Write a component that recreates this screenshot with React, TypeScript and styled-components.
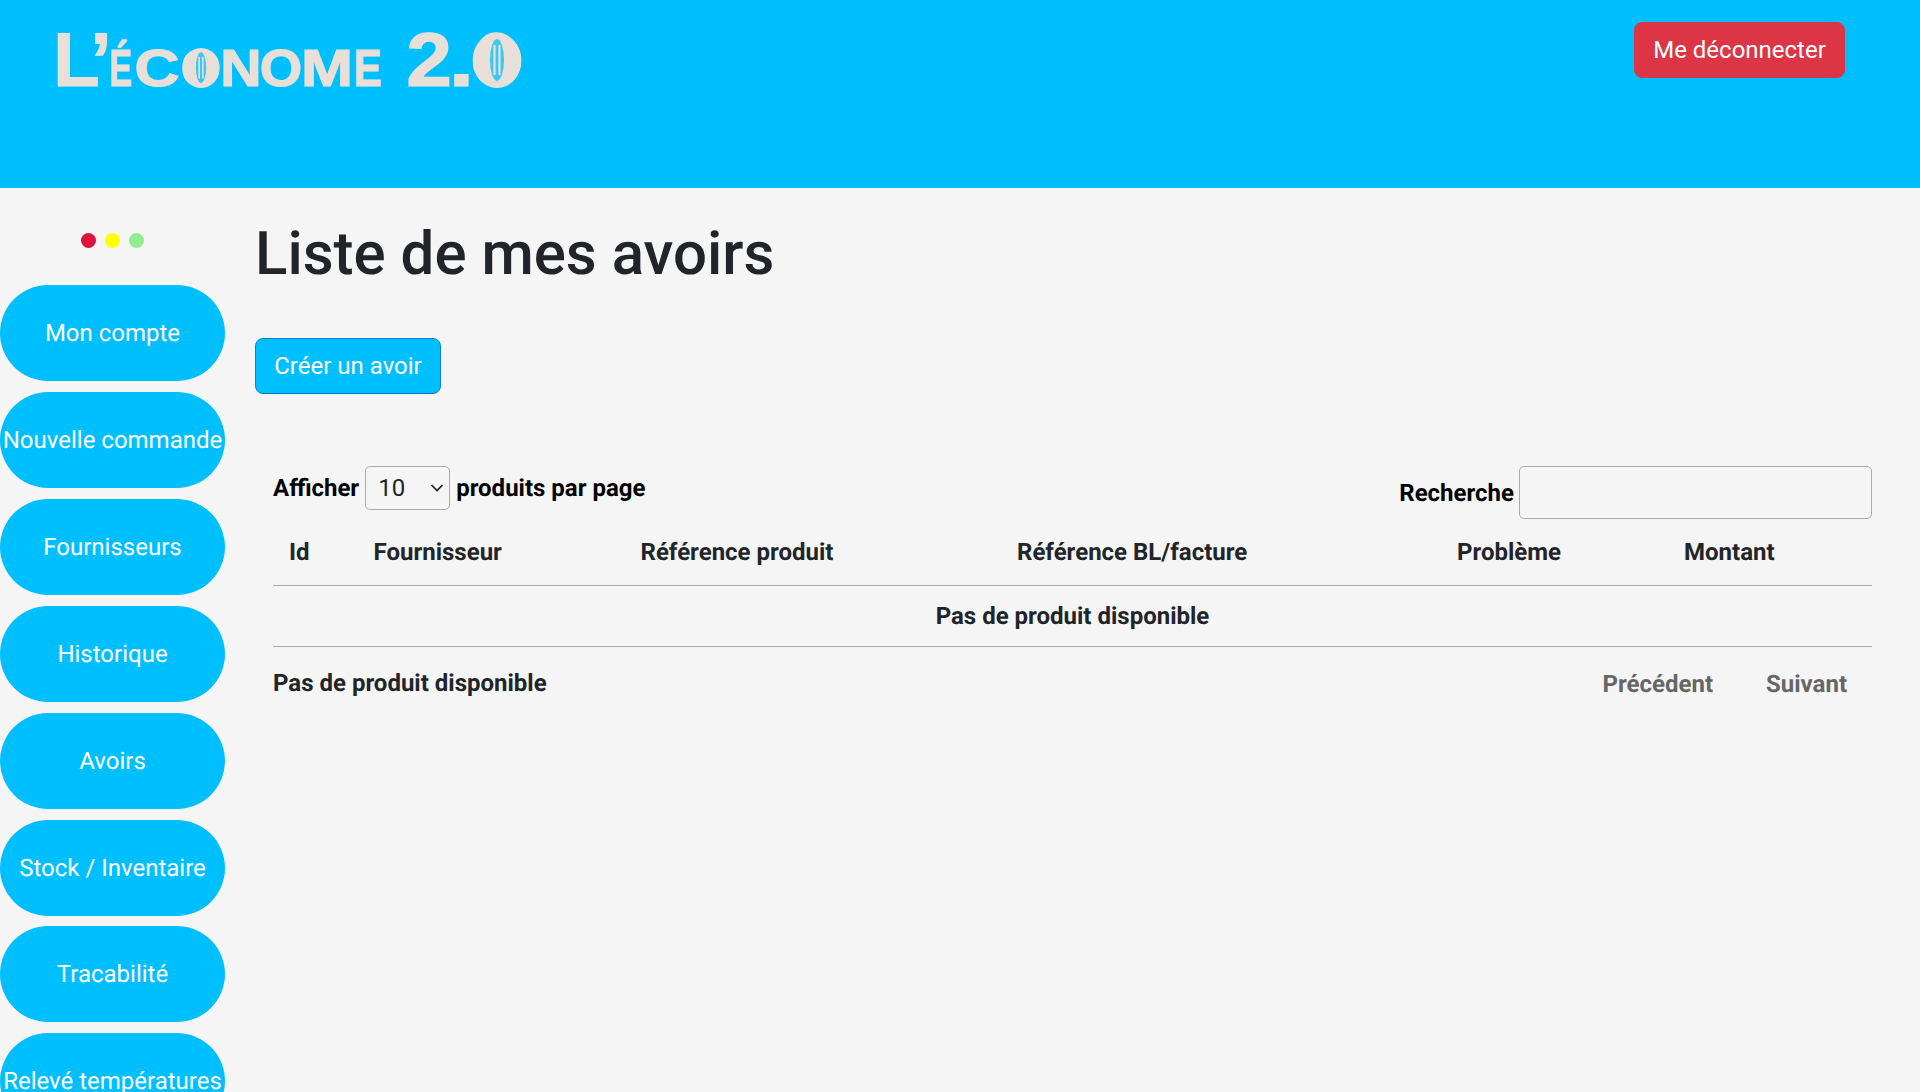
import React from "react";
import styled, { createGlobalStyle } from "styled-components";

const Global = createGlobalStyle`
  html, body { margin: 0; padding: 0; height: 1092px; overflow: hidden; background: #f5f5f5; }
  body { font-family: Roboto, "Liberation Sans", sans-serif; color: #212529; text-rendering: geometricPrecision; }
  * { box-sizing: border-box; }
`;

const Header = styled.header`
  height: 188px;
  background: #00bfff;
  display: flex;
  justify-content: space-between;
  align-items: flex-start;
  padding: 22px 75px 0 58px;
`;

const Logo = styled.div`
  display: flex;
  align-items: baseline;
  padding-top: 1px;
  font-family: "Liberation Sans", sans-serif;
  font-weight: 700;
  color: #e8e0d8;
  line-height: 76px;
  -webkit-text-stroke: 1.2px #e8e0d8;
`;

const Glyph = styled.span<{ $w: number; $sx: number; $size: number; $after?: number }>`
  position: relative;
  display: flex;
  justify-content: center;
  width: ${(p) => p.$w}px;
  margin-right: ${(p) => p.$after ?? 0}px;
  font-size: ${(p) => p.$size}px;
  transform: scaleX(${(p) => p.$sx});
`;

const BeanMark = styled.svg<{ $drop: number }>`
  position: absolute;
  left: 50%;
  bottom: ${(p) => p.$drop}px;
  transform: translateX(-50%);
`;

const LogoutButton = styled.button`
  height: 56px;
  width: 211px;
  border: 1px solid #dc3545;
  border-radius: 8px;
  background: #dc3545;
  color: #fff;
  font: 400 24px Roboto, sans-serif;
  padding: 0;
`;

const Body = styled.div`
  display: flex;
  align-items: flex-start;
`;

const Sidebar = styled.nav`
  width: 225px;
  flex: none;
  display: flex;
  flex-direction: column;
  gap: 10.91px;
`;

const Dots = styled.div`
  height: 86.09px;
  flex: none;
  display: flex;
  justify-content: center;
  gap: 9px;
  padding-top: 45px;
`;

const Dot = styled.span<{ $color: string }>`
  width: 15px;
  height: 15px;
  border-radius: 50%;
  background: ${(p) => p.$color};
`;

const Pill = styled.a`
  height: 96px;
  flex: none;
  border-radius: 48px;
  background: #00bfff;
  color: #fff;
  font-size: 24px;
  display: flex;
  align-items: center;
  justify-content: center;
  white-space: nowrap;
`;

const Main = styled.main`
  flex: 1;
  padding: 30px 48px 0 30px;
`;

const Title = styled.h1`
  margin: 0;
  font-size: 60px;
  font-weight: 500;
  line-height: 72px;
  color: #212529;
`;

const CreateButton = styled.button`
  display: block;
  margin-top: 48px;
  width: 186px;
  height: 56px;
  border: 1px solid #0b7fd6;
  border-radius: 8px;
  background: #00bfff;
  color: #fff;
  font: 400 24px Roboto, sans-serif;
  padding: 0;
`;

const TableArea = styled.section`
  margin: 72px 0 0 18px;
`;

const Controls = styled.div`
  display: flex;
  justify-content: space-between;
  align-items: flex-start;
  height: 53px;
`;

const ControlLabel = styled.label`
  display: flex;
  align-items: center;
  font-size: 24px;
  font-weight: 700;
  color: #000;
`;

const LengthLabel = styled(ControlLabel)`
  height: 44px;
  gap: 6px;
`;

const SearchLabel = styled(ControlLabel)`
  height: 53px;
  gap: 5px;
`;

const SelectWrap = styled.span`
  position: relative;
  display: flex;
`;

const PageSelect = styled.select`
  appearance: none;
  width: 85px;
  height: 44px;
  border: 1px solid #aaa;
  border-radius: 5px;
  background: transparent;
  color: #212529;
  font: 400 24px Roboto, sans-serif;
  padding: 0 0 0 12px;
`;

const SelectArrow = styled.svg`
  position: absolute;
  right: 6px;
  top: 17px;
  pointer-events: none;
`;

const SearchInput = styled.input`
  width: 353px;
  height: 53px;
  border: 1px solid #aaa;
  border-radius: 5px;
  background: transparent;
`;

const Table = styled.table`
  width: 100%;
  table-layout: fixed;
  border-collapse: collapse;
`;

const HeadCell = styled.th`
  height: 66px;
  padding: 0 0 0 16px;
  text-align: left;
  font-size: 24px;
  font-weight: 700;
  color: #212529;
  border-bottom: 1px solid #aaa;
`;

const EmptyCell = styled.td`
  height: 61px;
  padding: 0;
  text-align: center;
  font-size: 24px;
  font-weight: 700;
  border-bottom: 1px solid #aaa;
`;

const Footer = styled.div`
  display: flex;
  justify-content: space-between;
  align-items: center;
  height: 74px;
  font-size: 24px;
  font-weight: 700;
`;

const FooterInfo = styled.span`
  margin-top: -1px;
`;

const Pager = styled.div`
  display: flex;
  gap: 53px;
  padding-right: 25px;
  color: #666;
`;

const items = ["Mon compte", "Nouvelle commande", "Fournisseurs", "Historique", "Avoirs", "Stock / Inventaire", "Tracabilité", "Relevé températures"];
const columns: [string, number][] = [["Id", 84.5], ["Fournisseur", 267], ["Référence produit", 376.5], ["Référence BL/facture", 440], ["Problème", 227], ["Montant", 204]];

function Bean({ w, h, drop }: { w: number; h: number; drop: number }) {
  return (
    <BeanMark $drop={drop} width={w} height={h} viewBox="0 0 49 55">
      <ellipse cx="24.5" cy="27.5" rx="24.5" ry="27.5" fill="#e8e0d8" stroke="none" />
      <ellipse cx="24.5" cy="27" rx="7" ry="21" fill="#3cc8f2" />
      <path d="M22 12 V42 M27 12 V42" stroke="#e8e0d8" strokeWidth="2.2" />
    </BeanMark>
  );
}

export default function App() {
  return (
    <>
      <Global />
      <Header>
        <Logo>
          <Glyph $w={37} $sx={1} $size={76}>L</Glyph>
          <Glyph $w={12} $sx={1} $size={76}>’</Glyph>
          <Glyph $w={27} $sx={0.65} $size={52}>É</Glyph>
          <Glyph $w={46} $sx={1.2} $size={52}>C</Glyph>
          <Glyph $w={42} $sx={1} $size={52}>
            O
            <Bean w={39} h={40} drop={19} />
          </Glyph>
          <Glyph $w={38} $sx={1.1} $size={52}>N</Glyph>
          <Glyph $w={42} $sx={1.05} $size={52}>O</Glyph>
          <Glyph $w={50} $sx={1.2} $size={52}>M</Glyph>
          <Glyph $w={31} $sx={0.8} $size={52} $after={24}>E</Glyph>
          <Glyph $w={44} $sx={1.08} $size={76}>2</Glyph>
          <Glyph $w={21} $sx={1.2} $size={76}>.</Glyph>
          <Glyph $w={49} $sx={1} $size={76}>
            0
            <Bean w={49} h={55} drop={11} />
          </Glyph>
        </Logo>
        <LogoutButton>Me déconnecter</LogoutButton>
      </Header>
      <Body>
        <Sidebar>
          <Dots>
            <Dot $color="crimson" />
            <Dot $color="yellow" />
            <Dot $color="lightgreen" />
          </Dots>
          {items.map((t) => (
            <Pill key={t}>{t}</Pill>
          ))}
        </Sidebar>
        <Main>
          <Title>Liste de mes avoirs</Title>
          <CreateButton>Créer un avoir</CreateButton>
          <TableArea>
            <Controls>
              <LengthLabel>
                Afficher
                <SelectWrap>
                  <PageSelect defaultValue="10">
                    <option>10</option>
                    <option>25</option>
                    <option>50</option>
                  </PageSelect>
                  <SelectArrow width="14" height="10" viewBox="0 0 14 10">
                    <path d="M1.5 2 L7 7.5 L12.5 2" fill="none" stroke="#222" strokeWidth="1.7" />
                  </SelectArrow>
                </SelectWrap>
                produits par page
              </LengthLabel>
              <SearchLabel>
                Recherche
                <SearchInput type="text" />
              </SearchLabel>
            </Controls>
            <Table>
              <colgroup>
                {columns.map(([n, w]) => (
                  <col key={n} width={w} />
                ))}
              </colgroup>
              <thead>
                <tr>
                  {columns.map(([n]) => (
                    <HeadCell key={n}>{n}</HeadCell>
                  ))}
                </tr>
              </thead>
              <tbody>
                <tr>
                  <EmptyCell colSpan={6}>Pas de produit disponible</EmptyCell>
                </tr>
              </tbody>
            </Table>
            <Footer>
              <FooterInfo>Pas de produit disponible</FooterInfo>
              <Pager>
                <span>Précédent</span>
                <span>Suivant</span>
              </Pager>
            </Footer>
          </TableArea>
        </Main>
      </Body>
    </>
  );
}
